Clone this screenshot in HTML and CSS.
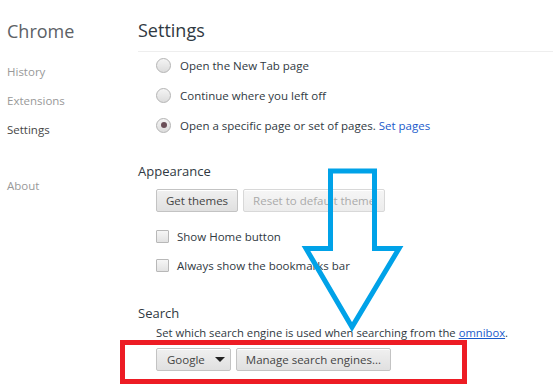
FILE: index.html
```html
<!DOCTYPE html>
<html>
<head>
<meta charset="utf-8">
<link rel="stylesheet" href="styles.css">
</head>
<body>
<div class="page">
  <nav class="side">
    <div class="brand">Chrome</div>
    <ul class="nav">
      <li>History</li>
      <li>Extensions</li>
      <li class="selected">Settings</li>
      <li class="about">About</li>
    </ul>
  </nav>
  <main class="main">
    <header class="head"><h1>Settings</h1></header>
    <section class="startup">
      <div class="row"><span class="radio"></span><span>Open the New Tab page</span></div>
      <div class="row"><span class="radio"></span><span>Continue where you left off</span></div>
      <div class="row"><span class="radio checked"></span><span>Open a specific page or set of pages. <a class="link">Set pages</a></span></div>
    </section>
    <section class="appearance">
      <h2>Appearance</h2>
      <div class="buttons">
        <button class="btn">Get themes</button>
        <button class="btn disabled">Reset to default theme</button>
      </div>
      <div class="checks">
        <div class="row"><span class="check"></span><span>Show Home button</span></div>
        <div class="row"><span class="check"></span><span>Always show the bookmarks bar</span></div>
      </div>
    </section>
    <section class="search">
      <h2>Search</h2>
      <p class="desc">Set which search engine is used when searching from the <a class="link under">omnibox</a>.</p>
      <div class="buttons tight">
        <button class="btn select">Google<span class="caret"></span></button>
        <button class="btn">Manage search engines...</button>
      </div>
    </section>
  </main>
  <svg class="overlay" width="553" height="390" viewBox="0 0 553 390">
    <polygon points="330.5,171 374.5,171 374.5,248.5 399,248.5 352,327 306,248.5 330.5,248.5" fill="none" stroke="#00a2e8" stroke-width="5" stroke-linejoin="miter"/>
    <rect x="122.5" y="342.5" width="342" height="39" fill="none" stroke="#ed1c24" stroke-width="5"/>
  </svg>
</div>
</body>
</html>
```

FILE: styles.css
```css
html, body {
  margin: 0;
  padding: 0;
  background: #fff;
}
body {
  font-family: "Open Sans", "Noto Sans", sans-serif;
  font-size: 11.5px;
  color: #303942;
  width: 553px;
  height: 390px;
  overflow: hidden;
}
.page {
  position: relative;
  display: flex;
  width: 553px;
  height: 390px;
}
.side {
  width: 131px;
  padding-left: 7px;
  flex: none;
}
.brand {
  margin-top: 20px;
  line-height: 22px;
  font-size: 18px;
  color: #5c6166;
}
.nav {
  list-style: none;
  margin: 15px 0 0;
  padding: 0;
}
.nav li {
  line-height: 29px;
  height: 29px;
  color: #999;
}
.nav li.selected {
  color: #464646;
}
.nav li.about {
  margin-top: 27px;
}
.main {
  flex: 1;
}
.head {
  margin-top: 19px;
  padding-bottom: 10px;
  border-bottom: 1px solid #eee;
}
.head h1 {
  margin: 0;
  font-size: 18px;
  font-weight: normal;
  line-height: 22px;
  color: #303942;
}
.startup {
  padding-left: 18px;
  padding-top: 2px;
  display: flex;
  flex-direction: column;
  gap: 8px;
}
.row {
  display: flex;
  align-items: center;
  height: 22px;
}
.radio {
  width: 13px;
  height: 13px;
  border-radius: 50%;
  border: 1px solid #b4b4b4;
  background: linear-gradient(#f4f4f4, #dcdcdc);
  margin-right: 9px;
  position: relative;
  box-sizing: content-box;
}
.radio.checked::after {
  content: "";
  position: absolute;
  left: 3.5px;
  top: 3.5px;
  width: 6px;
  height: 6px;
  border-radius: 50%;
  background: #6b4f58;
}
.link {
  color: #1a5acb;
}
.under {
  text-decoration: underline;
}
h2 {
  margin: 0;
  font-size: 13px;
  font-weight: normal;
  line-height: 20px;
  color: #303942;
}
.appearance {
  margin-top: 25px;
}
.buttons {
  display: flex;
  gap: 5px;
  padding-left: 18px;
  margin-top: 8px;
}
.btn {
  font-family: inherit;
  font-size: 11.5px;
  color: #444;
  height: 23px;
  padding: 0 9px;
  border: 1px solid #c3c3c3;
  border-radius: 2px;
  background: linear-gradient(#f0f0f0, #e0e0e0);
  box-shadow: inset 0 1px 0 #fff;
}
.btn.disabled {
  color: #aaa;
  border-color: #d8d8d8;
  background: linear-gradient(#f6f6f6, #ececec);
}
.checks {
  margin-top: 13px;
  padding-left: 18px;
  display: flex;
  flex-direction: column;
  gap: 7px;
}
.check {
  width: 11px;
  height: 11px;
  border: 1px solid #b8b8b8;
  border-radius: 1px;
  background: linear-gradient(#f6f6f6, #e2e2e2);
  margin-right: 8px;
}
.search {
  margin-top: 27px;
}
.desc {
  margin: 0;
  padding-left: 18px;
  line-height: 20px;
  font-size: 11.25px;
}
.buttons.tight {
  margin-top: 5px;
}
.btn.select {
  display: flex;
  align-items: center;
  padding: 0 5px 0 10px;
}
.caret {
  width: 0;
  height: 0;
  border-left: 5px solid transparent;
  border-right: 5px solid transparent;
  border-top: 5px solid #222;
  margin-left: 10px;
}
.overlay {
  position: absolute;
  left: 0;
  top: 0;
  pointer-events: none;
}
```
